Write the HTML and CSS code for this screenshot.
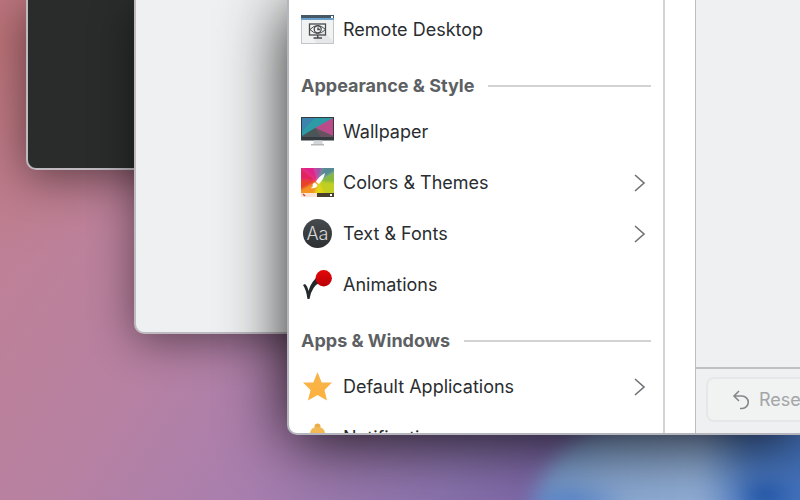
FILE: index.html
```html
<!DOCTYPE html>
<html lang="en">
<head>
<meta charset="utf-8">
<title>System Settings</title>
<link rel="stylesheet" href="styles.css">
</head>
<body>
<main class="desktop">
  <div class="bloom" aria-hidden="true"></div>
  <div class="window window-dark"></div>
  <div class="window window-light"></div>

  <section class="window window-front">
    <nav class="sidebar">
      <a class="row" href="#">
        <svg class="icon" viewBox="0 0 34 34" aria-hidden="true">
          <rect x="0.500" y="3" width="32" height="27.500" fill="#f1f2f2" stroke="#c3c6c8"/>
          <path d="M22 18l10 10v2H15l-2-4z" fill="#e5e7e8"/>
          <rect x="0" y="2" width="33" height="4" fill="#465866"/>
          <rect x="0" y="5" width="33" height="2" fill="#6aa0cc"/>
          <rect x="30" y="3" width="2" height="2" fill="#fff"/>
          <rect x="8.500" y="11" width="16" height="11" fill="none" stroke="#484c4f" stroke-width="1.300"/>
          <path d="M9 16.500q7.500-8 15.500 0q-8 8-15.500 0z" fill="none" stroke="#484c4f"/>
          <circle cx="16.700" cy="16.300" r="3.500" fill="none" stroke="#484c4f" stroke-width="1.300"/>
          <path d="M17 14.500v2h2M16.700 22v3M12.500 25h8.500" fill="none" stroke="#484c4f" stroke-width="1.500"/>
        </svg>
        <span class="label">Remote Desktop</span>
      </a>

      <h2 class="heading">Appearance &amp; Style</h2>

      <a class="row" href="#">
        <svg class="icon" viewBox="0 0 34 34" aria-hidden="true">
          <rect x="0" y="2" width="33" height="23.500" fill="#343a40"/>
          <rect x="1" y="3" width="31" height="19" fill="#2d9ba5"/>
          <path d="M1 3h13L1 16z" fill="#3a84ad"/>
          <path d="M32 3v18L14 13z" fill="#bb4b88"/>
          <path d="M14 13l18 8v1H1v-1z" fill="#4a5558"/>
          <path d="M14 13l18 8v1H20z" fill="#695160"/>
          <path d="M13 25.500h8l1 4H12z" fill="#d3d7d9"/>
          <rect x="10" y="29" width="13" height="1.500" fill="#b4b8ba"/>
        </svg>
        <span class="label">Wallpaper</span>
      </a>

      <a class="row" href="#">
        <svg class="icon" viewBox="0 0 34 34" aria-hidden="true">
          <defs>
            <filter id="soft" x="-10%" y="-10%" width="120%" height="120%"><feGaussianBlur stdDeviation="1.200"/></filter>
            <clipPath id="swatch"><rect x="0" y="2" width="33" height="25"/></clipPath>
          </defs>
          <g clip-path="url(#swatch)"><g filter="url(#soft)">
            <path d="M-3-1h16l4 16z" fill="#e0208a"/>
            <path d="M13-1h9l-5 16z" fill="#a052a8"/>
            <path d="M22-1h15v5L17 15z" fill="#568c91"/>
            <path d="M37 4v14l-20-3z" fill="#86b93e"/>
            <path d="M37 17v13H24l-7-15z" fill="#c0cf20"/>
            <path d="M25 30H11l6-15z" fill="#e3d412"/>
            <path d="M13 30H-3v-6l20-9z" fill="#f39421"/>
            <path d="M-3 25V12l20 3z" fill="#e9412a"/>
            <path d="M-3 13V-1l20 16z" fill="#e32262"/>
          </g></g>
          <rect x="0" y="27" width="16" height="4" fill="#fbe3d5"/>
          <rect x="16" y="27" width="17" height="4" fill="#493f2d"/>
          <path d="M2 28l2 2" stroke="#d4473a" stroke-width="1.500"/>
          <rect x="29" y="28" width="2" height="2" fill="#fff"/>
          <path d="M24 7q-7 4-9 9l3 2q5-5 6-11zM14 16.500l2.500 2.500q-1 4-7 3q3-1 2-3q0-2 2.500-2.500z" fill="#fff"/>
        </svg>
        <span class="label">Colors &amp; Themes</span>
        <svg class="chevron" viewBox="0 0 12 18" aria-hidden="true"><path d="M1 1l9 8-9 8"/></svg>
      </a>

      <a class="row" href="#">
        <svg class="icon" viewBox="0 0 34 34" aria-hidden="true">
          <defs><linearGradient id="disc" x1="0" y1="0" x2="0" y2="1"><stop offset="0" stop-color="#484b4d"/><stop offset="1" stop-color="#2d3032"/></linearGradient></defs>
          <circle cx="16.500" cy="16.500" r="14.500" fill="url(#disc)"/>
          <text class="glyph" x="16.500" y="23" text-anchor="middle">Aa</text>
        </svg>
        <span class="label">Text &amp; Fonts</span>
        <svg class="chevron" viewBox="0 0 12 18" aria-hidden="true"><path d="M1 1l9 8-9 8"/></svg>
      </a>

      <a class="row" href="#">
        <svg class="icon" viewBox="0 0 34 34" aria-hidden="true">
          <defs><linearGradient id="ball" x1="0" y1="0" x2="0" y2="1"><stop offset="0" stop-color="#e40808"/><stop offset="1" stop-color="#b90006"/></linearGradient></defs>
          <path d="M2 17l2-1q2.500 2 3.500 7Q10 13 18 8l2 6Q10.500 18 8.500 31H6.500Q5 21 2 17z" fill="#24292c"/>
          <circle cx="22.700" cy="10.200" r="8.200" fill="url(#ball)"/>
        </svg>
        <span class="label">Animations</span>
      </a>

      <h2 class="heading">Apps &amp; Windows</h2>

      <a class="row" href="#">
        <svg class="icon" viewBox="0 0 34 34" aria-hidden="true">
          <defs><linearGradient id="gold" x1="0" y1="0" x2="0" y2="1"><stop offset="0" stop-color="#f6b44b"/><stop offset="1" stop-color="#feb13e"/></linearGradient></defs>
          <path d="M16.500 2l4.200 10.500h10.300l-7.500 7.500 2.500 10.500-9.500-5.500-9.500 5.500 2.500-10.500L2 12.500h10.300z" fill="url(#gold)"/>
        </svg>
        <span class="label">Default Applications</span>
        <svg class="chevron" viewBox="0 0 12 18" aria-hidden="true"><path d="M1 1l9 8-9 8"/></svg>
      </a>

      <a class="row" href="#">
        <svg class="icon" viewBox="0 0 34 34" aria-hidden="true">
          <circle cx="16.500" cy="5.500" r="3" fill="#e9ae49"/>
          <path d="M9 26V13q0-7 7.500-7t7.500 7v13z" fill="#f2b955"/>
        </svg>
        <span class="label">Notifications</span>
      </a>
    </nav>

    <div class="gutter"></div>

    <div class="pane">
      <div class="content"></div>
      <footer class="footer">
        <button class="reset" type="button" disabled>
          <svg class="undo" viewBox="0 0 18 20" aria-hidden="true"><path d="M7 1L2 6l5 5M2 6h8a6 6 0 0 1 0 12.500H8"/></svg>
          <span>Reset</span>
        </button>
      </footer>
    </div>
  </section>
</main>
</body>
</html>
```

FILE: styles.css
```css
* { box-sizing: border-box; }

body {
  margin: 0;
  font-family: Inter, "Noto Sans", sans-serif;
  font-size: 18px;
  line-height: 24px;
  color: #2a2d30;
}

.desktop {
  position: relative;
  height: 100vh;
  overflow: hidden;
  background:
    radial-gradient(circle at 0 8%, rgba(184, 106, 104, 0.65) 0, rgba(187, 104, 101, 0) 220px),
    linear-gradient(124deg, #bf8094 12%, #b781a2 34%, #a77eaf 52%, #8b74ae 68%, #7560a5 82%);
}

/* Blue bloom of the wallpaper in the lower right corner */
.bloom {
  position: absolute;
  right: 0;
  bottom: 0;
  width: 320px;
  height: 100px;
  overflow: hidden;
}

.bloom::before {
  content: "";
  position: absolute;
  top: 24px;
  left: 50px;
  width: 340px;
  height: 180px;
  border-radius: 100px 0 0 0;
  filter: blur(10px);
  background:
    radial-gradient(ellipse at 235px 72px, #08419c 0, rgba(8, 65, 156, 0) 32px),
    radial-gradient(ellipse at 40px 80px, #4a7ccb 0, rgba(74, 124, 203, 0) 60px),
    linear-gradient(90deg, #7699ca 0, #8ba9d2 90px, #91aed6 170px, #4a78c0 220px, #3c6dbb 340px);
}

/* Windows stand freely on the desktop */
.window {
  position: absolute;
  top: 0;
  border: 2px solid #bfb9c0;
  border-width: 0 0 2px 2px;
  border-bottom-left-radius: 10px;
  box-shadow: 0 8px 44px rgba(0, 0, 0, 0.48);
}

.window-dark {
  left: 26px;
  right: 200px;
  bottom: 330px;
  background: #2a2c2c;
}

.window-light {
  left: 134px;
  right: 100px;
  bottom: 166px;
  background: #eff0f1;
}

.window-front {
  left: 287px;
  right: 0;
  bottom: 65px;
  display: flex;
  overflow: hidden;
  background: #fff;
  border-color: #b4b5bd;
  box-shadow: 0 8px 64px rgba(0, 0, 0, 0.85);
}

.sidebar {
  flex: 0 0 376px;
  padding: 4px 12px 0;
  border-right: 2px solid #d2d3d4;
}

.row {
  display: flex;
  align-items: center;
  gap: 8px;
  height: 51px;
  color: inherit;
  text-decoration: none;
}

.icon {
  flex: none;
  width: 34px;
  height: 34px;
}

.glyph {
  font-size: 18px;
  font-weight: 300;
  fill: #d6d8d9;
}

.label {
  flex: 1;
  white-space: nowrap;
}

.chevron {
  flex: none;
  width: 12px;
  height: 18px;
  margin-right: 5px;
  fill: none;
  stroke: #6f7376;
  stroke-width: 1.6;
}

.heading {
  display: flex;
  align-items: center;
  gap: 14px;
  height: 51px;
  margin: 0;
  padding-top: 10px;
  font-size: 18px;
  font-weight: 700;
  color: #5d6063;
  white-space: nowrap;
}

.heading::after {
  content: "";
  flex: 1;
  height: 2px;
  background: #d2d3d4;
}

.gutter {
  flex: 0 0 30px;
}

.pane {
  flex: 1;
  display: flex;
  flex-direction: column;
  min-width: 0;
  border-left: 1px solid #bbbdc0;
  background: #eff0f1;
}

.content {
  flex: 1;
}

.footer {
  padding: 8px 0 11px 10px;
  border-top: 2px solid #bec0c4;
}

.reset {
  display: flex;
  align-items: center;
  gap: 9px;
  width: 120px;
  height: 45px;
  padding: 0 24px;
  border: 2px solid #e5e7e8;
  border-radius: 8px;
  background: #f1f2f2;
  font: inherit;
  color: #a3a5a7;
}

.undo {
  flex: none;
  width: 18px;
  height: 20px;
  fill: none;
  stroke: #85888a;
  stroke-width: 1.6;
}
```
